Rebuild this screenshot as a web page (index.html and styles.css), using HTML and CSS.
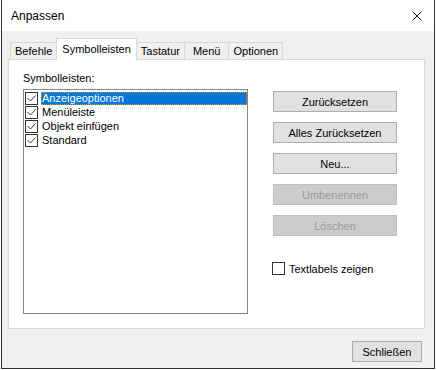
FILE: index.html
```html
<!DOCTYPE html>
<html lang="de">
<head>
  <meta charset="UTF-8">
  <title>Anpassen</title>
  <link rel="stylesheet" href="styles.css">
</head>
<body>

  <div class="window">
    <div class="titlebar">
      <span class="title">Anpassen</span>
      <svg class="close-icon" width="10" height="10" viewBox="0 0 10 10">
        <path d="M0.5 0.5 L9.5 9.5 M9.5 0.5 L0.5 9.5" stroke="#111" stroke-width="1" fill="none"/>
      </svg>
    </div>

    <div class="client">
      <!-- Reiter -->
      <div class="tabs">
        <div class="tab">Befehle</div>
        <div class="tab active">Symbolleisten</div>
        <div class="tab">Tastatur</div>
        <div class="tab tab-menu">Menü</div>
        <div class="tab">Optionen</div>
      </div>

      <div class="panel">
        <div class="panel-label">Symbolleisten:</div>
        <div class="panel-row">
          <ul class="listbox">
            <li class="item">
              <span class="check"><svg width="11" height="11" viewBox="0 0 11 11"><path d="M1.5 5 L4.5 8 L9.5 2.5" stroke="#333" fill="none"/></svg></span>
              <span class="item-text selected">Anzeigeoptionen</span>
            </li>
            <li class="item">
              <span class="check"><svg width="11" height="11" viewBox="0 0 11 11"><path d="M1.5 5 L4.5 8 L9.5 2.5" stroke="#333" fill="none"/></svg></span>
              <span class="item-text">Menüleiste</span>
            </li>
            <li class="item">
              <span class="check"><svg width="11" height="11" viewBox="0 0 11 11"><path d="M1.5 5 L4.5 8 L9.5 2.5" stroke="#333" fill="none"/></svg></span>
              <span class="item-text">Objekt einfügen</span>
            </li>
            <li class="item">
              <span class="check"><svg width="11" height="11" viewBox="0 0 11 11"><path d="M1.5 5 L4.5 8 L9.5 2.5" stroke="#333" fill="none"/></svg></span>
              <span class="item-text">Standard</span>
            </li>
          </ul>

          <div class="actions">
            <button class="btn">Zurücksetzen</button>
            <button class="btn">Alles Zurücksetzen</button>
            <button class="btn">Neu...</button>
            <button class="btn" disabled>Umbenennen</button>
            <button class="btn" disabled>Löschen</button>
            <label class="option"><span class="check"></span>Textlabels zeigen</label>
          </div>
        </div>
      </div>

      <div class="footer">
        <button class="btn btn-close">Schließen</button>
      </div>
    </div>
  </div>

</body>
</html>
```

FILE: styles.css
```css
body {
  margin: 0;
  background-color: #fff;
  font-family: "Liberation Sans", Arial, sans-serif;
  font-size: 11px;
  color: #000;
}

.window {
  margin-left: 1px;
  width: 432px;
  height: 368px;
  border: 1px solid #333;
  border-top: none;
  display: flex;
  flex-direction: column;
}

.titlebar {
  height: 31px;
  box-sizing: border-box;
  background-color: #fff;
  display: flex;
  align-items: center;
  justify-content: space-between;
  padding: 1px 12px 0 9px;
}

.title {
  font-size: 12px;
}

.close-icon {
  display: block;
}

.client {
  flex: 1;
  background-color: #f0f0f0;
  padding: 7px 9px 0 6px;
}

/* Reiter */
.tabs {
  display: flex;
  align-items: flex-end;
  padding-left: 3px;
}

.tab {
  height: 17px;
  box-sizing: border-box;
  padding: 2px 4px 0;
  line-height: 13px;
  border: 1px solid #d9d9d9;
  border-bottom: none;
  background-color: #f0f0f0;
  margin-left: -1px;
}

.tab.active {
  height: 22px;
  padding: 4px 5px 0;
  margin-bottom: -1px;
  background-color: #fff;
  position: relative;
  z-index: 1;
}

.tab-menu {
  padding: 2px 8px 0;
}

.panel {
  height: 270px;
  box-sizing: border-box;
  background-color: #fff;
  border: 1px solid #d9d9d9;
  padding: 12px 14px;
}

.panel-label {
  line-height: 13px;
  margin-bottom: 4px;
}

.panel-row {
  display: flex;
  align-items: flex-start;
}

.listbox {
  width: 225px;
  height: 225px;
  box-sizing: border-box;
  margin: 0;
  padding: 1px 0;
  list-style: none;
  border: 1px solid #828790;
}

.item {
  display: flex;
  align-items: center;
  height: 14px;
  padding-left: 1px;
}

.check {
  width: 13px;
  height: 13px;
  box-sizing: border-box;
  border: 1px solid #333;
  background-color: #fff;
  flex-shrink: 0;
}

.check svg {
  display: block;
}

.item-text {
  flex: 1;
  margin-left: 3px;
  height: 13px;
  line-height: 13px;
  padding-left: 1px;
}

.item-text.selected {
  background-color: #0078d7;
  color: #fff;
  outline: 1px dotted #f08a2c;
  outline-offset: -1px;
}

.actions {
  margin-left: 25px;
  margin-top: 2px;
}

.btn {
  display: block;
  width: 124px;
  height: 21px;
  padding: 0;
  margin-bottom: 10px;
  border: 1px solid #adadad;
  background-color: #e1e1e1;
  font-family: inherit;
  font-size: 11px;
  color: #000;
}

.btn:disabled {
  background-color: #cccccc;
  border-color: #bfbfbf;
  color: #9a9a9a;
}

.option {
  display: flex;
  align-items: center;
  margin-top: 26px;
  margin-left: -1px;
}

.option .check {
  margin-right: 4px;
}

.footer {
  display: flex;
  justify-content: flex-end;
  margin-top: 12px;
  padding-right: 3px;
}

.btn-close {
  width: 70px;
  margin-bottom: 0;
}
```
